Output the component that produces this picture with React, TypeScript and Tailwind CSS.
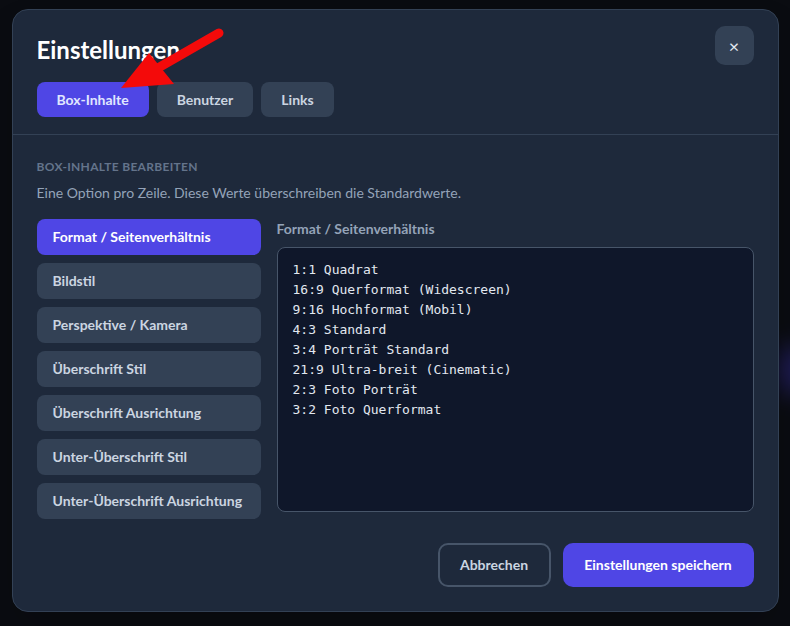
import React, { useState } from 'react';

const FONT = { fontFamily: 'Lato, "Noto Sans", sans-serif' };
const MONO = { fontFamily: '"DejaVu Sans Mono", "Liberation Mono", monospace' };

const tabs = ['Box-Inhalte', 'Benutzer', 'Links'];

const sections = [
  'Format / Seitenverhältnis',
  'Bildstil',
  'Perspektive / Kamera',
  'Überschrift Stil',
  'Überschrift Ausrichtung',
  'Unter-Überschrift Stil',
  'Unter-Überschrift Ausrichtung',
];

const formatOptions = [
  '1:1 Quadrat',
  '16:9 Querformat (Widescreen)',
  '9:16 Hochformat (Mobil)',
  '4:3 Standard',
  '3:4 Porträt Standard',
  '21:9 Ultra-breit (Cinematic)',
  '2:3 Foto Porträt',
  '3:2 Foto Querformat',
].join('\n');

const App: React.FC = () => {
  const [activeTab, setActiveTab] = useState(0);
  const [active, setActive] = useState(0);
  const [value, setValue] = useState(formatOptions);

  return (
    <div className="relative min-h-[626px] w-full overflow-hidden bg-[#0a0c11] pt-[9px]" style={FONT}>
      {/* blurred backdrop glow */}
      <div className="absolute right-[-20px] top-[345px] h-[50px] w-[30px] rounded-full bg-[#4338ca] opacity-40 blur-md" />

      <div className="relative mx-auto w-[767px] rounded-2xl border border-[#334155] bg-[#1e293b] shadow-2xl">
        {/* header */}
        <div className="border-b border-[#334155] px-6 pb-[17px] pt-6">
          <h1 className="text-2xl font-bold leading-8 text-white">Einstellungen</h1>
          <div className="mt-4 flex gap-2">
            {tabs.map((t, i) => (
              <button
                key={t}
                onClick={() => setActiveTab(i)}
                className={
                  'h-[35px] rounded-lg px-5 text-sm font-bold ' +
                  (i === activeTab ? 'bg-[#4f46e5] text-[#e0e7ff]' : 'bg-[#334155] text-[#cbd5e1]')
                }
              >
                {t}
              </button>
            ))}
          </div>
          <button className="absolute right-6 top-4 flex h-[39px] w-[39px] items-center justify-center rounded-[10px] bg-[#334155] text-lg leading-none text-[#e2e8f0]">
            ×
          </button>
        </div>

        {/* body */}
        <div className="px-6 pb-6 pt-6">
          <h2 className="text-xs font-bold uppercase leading-4 tracking-wide text-[#64748b]">Box-Inhalte bearbeiten</h2>
          <p className="mt-2 text-sm leading-5 text-[#94a3b8]">
            Eine Option pro Zeile. Diese Werte überschreiben die Standardwerte.
          </p>

          <div className="mt-4 flex gap-4">
            <div className="flex w-[224px] shrink-0 flex-col gap-2">
              {sections.map((s, i) => (
                <button
                  key={s}
                  onClick={() => setActive(i)}
                  className={
                    'h-9 rounded-lg px-4 text-left text-sm font-bold ' +
                    (i === active ? 'bg-[#4f46e5] text-white' : 'bg-[#334155] text-[#cbd5e1]')
                  }
                >
                  {s}
                </button>
              ))}
            </div>

            <div className="flex flex-1 flex-col">
              <label className="text-sm font-bold leading-5 text-[#94a3b8]">{sections[active]}</label>
              <textarea
                value={value}
                onChange={(e) => setValue(e.target.value)}
                spellCheck={false}
                className="mt-2 h-[265px] resize-none rounded-lg border border-[#475569] bg-[#0f172a] px-[15px] py-3 text-[13px] leading-5 text-[#e2e8f0] outline-none"
                style={MONO}
              />
            </div>
          </div>
        </div>

        {/* footer */}
        <div className="flex justify-end gap-3 px-6 pb-6">
          <button className="h-11 w-[113px] rounded-[10px] border-2 border-[#475569] text-sm font-bold text-[#cbd5e1]">
            Abbrechen
          </button>
          <button className="h-11 w-[191px] rounded-[10px] bg-[#4f46e5] text-sm font-bold text-white">
            Einstellungen speichern
          </button>
        </div>
      </div>

      {/* annotation arrow */}
      <svg className="pointer-events-none absolute left-0 top-0" width="790" height="626">
        <line x1="219" y1="33" x2="158" y2="68" stroke="#f40a0a" strokeWidth="9" strokeLinecap="round" />
        <polygon points="121,88 149,53 174,84" fill="#f40a0a" />
      </svg>
    </div>
  );
};

export default App;
